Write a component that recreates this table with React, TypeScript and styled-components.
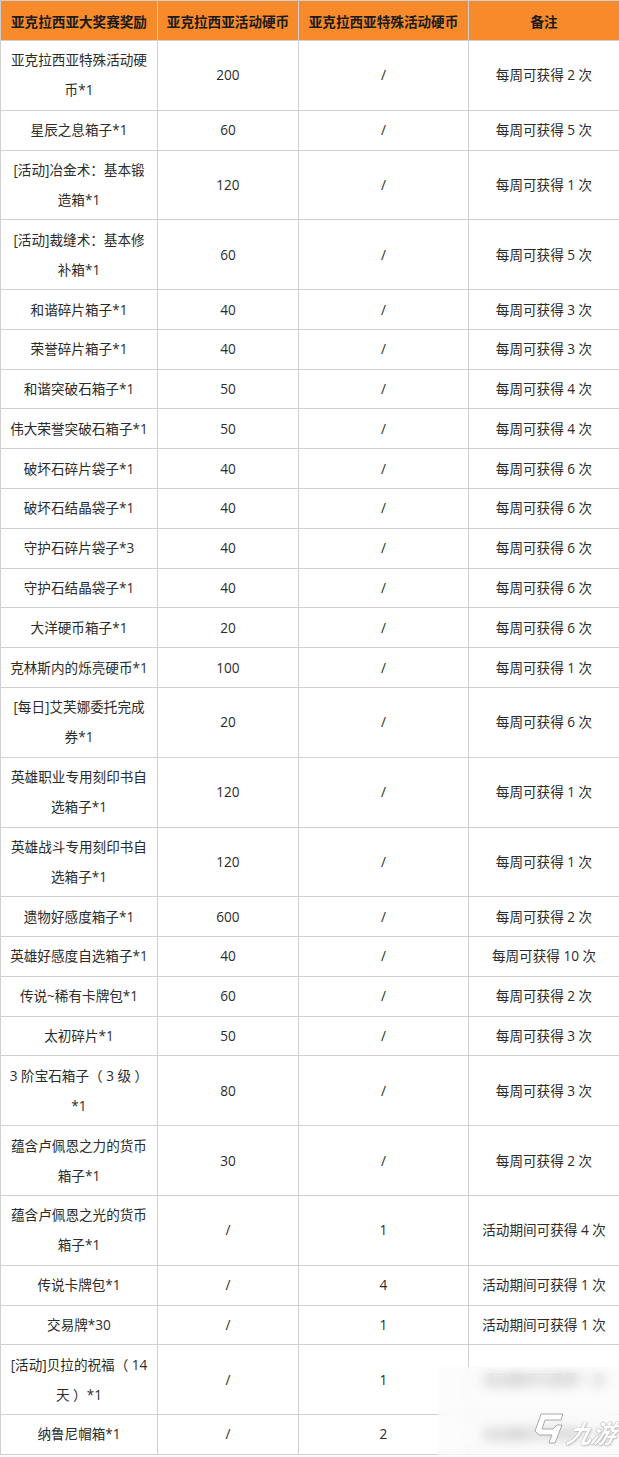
import React from "react";
import styled, { createGlobalStyle } from "styled-components";

const GlobalStyle = createGlobalStyle`
  html, body {
    margin: 0;
    padding: 0;
    background: #fff;
  }
  body {
    font-family: "Open Sans", "Noto Sans CJK SC", sans-serif;
  }
`;

const Page = styled.div`
  position: relative;
  width: 619px;
`;

const Table = styled.table`
  width: 619px;
  border-collapse: collapse;
  table-layout: fixed;
  font-size: 13.6px;
  color: #2b2b2b;
`;

const HeadCell = styled.th`
  background: #f78a2a;
  color: #1b1b1b;
  font-weight: bold;
  border: 1px solid #cfcfcf;
  height: 39px;
  padding: 0 4px;
  line-height: 30px;
  text-align: center;
  white-space: nowrap;
  font-family: "Noto Sans CJK SC", sans-serif;
`;

const Cell = styled.td`
  border: 1px solid #cfcfcf;
  padding: 4.4px 5px;
  line-height: 30px;
  text-align: center;
  vertical-align: middle;
  white-space: pre-line;
`;

const Watermark = styled.div`
  position: absolute;
  left: 438px;
  top: 1367px;
  width: 181px;
  height: 90px;
  background: rgba(250, 250, 250, 0.55);
  backdrop-filter: blur(6px);
  -webkit-backdrop-filter: blur(6px);
  display: flex;
  align-items: flex-end;
  justify-content: flex-end;
  gap: 3px;
  padding: 0 3px 13px 0;
  box-sizing: border-box;
`;

const LogoText = styled.span`
  font-family: "Noto Sans CJK SC", sans-serif;
  font-size: 25px;
  font-style: italic;
  font-weight: bold;
  line-height: 24px;
  color: #fff;
  transform: skewX(-14deg);
  letter-spacing: -1px;
  text-shadow: 0 0 1px #9a9a9a, 0 0 1px #9a9a9a, 1px 1px 2px #c8c8c8;
`;

type Row = [string, string, string, string];

const rows: Row[] = [
  ["亚克拉西亚特殊活动硬\n币*1", "200", "/", "每周可获得 2 次"],
  ["星辰之息箱子*1", "60", "/", "每周可获得 5 次"],
  ["[活动]冶金术：基本锻\n造箱*1", "120", "/", "每周可获得 1 次"],
  ["[活动]裁缝术：基本修\n补箱*1", "60", "/", "每周可获得 5 次"],
  ["和谐碎片箱子*1", "40", "/", "每周可获得 3 次"],
  ["荣誉碎片箱子*1", "40", "/", "每周可获得 3 次"],
  ["和谐突破石箱子*1", "50", "/", "每周可获得 4 次"],
  ["伟大荣誉突破石箱子*1", "50", "/", "每周可获得 4 次"],
  ["破坏石碎片袋子*1", "40", "/", "每周可获得 6 次"],
  ["破坏石结晶袋子*1", "40", "/", "每周可获得 6 次"],
  ["守护石碎片袋子*3", "40", "/", "每周可获得 6 次"],
  ["守护石结晶袋子*1", "40", "/", "每周可获得 6 次"],
  ["大洋硬币箱子*1", "20", "/", "每周可获得 6 次"],
  ["克林斯内的烁亮硬币*1", "100", "/", "每周可获得 1 次"],
  ["[每日]艾芙娜委托完成\n券*1", "20", "/", "每周可获得 6 次"],
  ["英雄职业专用刻印书自\n选箱子*1", "120", "/", "每周可获得 1 次"],
  ["英雄战斗专用刻印书自\n选箱子*1", "120", "/", "每周可获得 1 次"],
  ["遗物好感度箱子*1", "600", "/", "每周可获得 2 次"],
  ["英雄好感度自选箱子*1", "40", "/", "每周可获得 10 次"],
  ["传说~稀有卡牌包*1", "60", "/", "每周可获得 2 次"],
  ["太初碎片*1", "50", "/", "每周可获得 3 次"],
  ["3 阶宝石箱子（ 3 级 ）\n*1", "80", "/", "每周可获得 3 次"],
  ["蕴含卢佩恩之力的货币\n箱子*1", "30", "/", "每周可获得 2 次"],
  ["蕴含卢佩恩之光的货币\n箱子*1", "/", "1", "活动期间可获得 4 次"],
  ["传说卡牌包*1", "/", "4", "活动期间可获得 1 次"],
  ["交易牌*30", "/", "1", "活动期间可获得 1 次"],
  ["[活动]贝拉的祝福（ 14\n天 ）*1", "/", "1", "活动期间可获得 1 次"],
  ["纳鲁尼帽箱*1", "/", "2", "活动期间可获得 1 次"],
];

const LogoMark = () => (
  <svg width="34" height="32" viewBox="0 0 34 32">
    <path
      d="M10 2 L32 2 L30 8 L14 8 L11 17 L22 17 L26 13 L31 13 L24 31 L18 31 L21 23 L8 23 L4 19 Z"
      fill="#fff"
      stroke="#a8a8a8"
      strokeWidth="1"
      strokeLinejoin="round"
    />
  </svg>
);

const App = () => {
  return (
    <React.Fragment>
      <GlobalStyle />
      <Page>
        <Table>
          <colgroup>
            <col style={{ width: 157 }} />
            <col style={{ width: 141 }} />
            <col style={{ width: 170 }} />
            <col style={{ width: 151 }} />
          </colgroup>
          <thead>
            <tr>
              <HeadCell>亚克拉西亚大奖赛奖励</HeadCell>
              <HeadCell>亚克拉西亚活动硬币</HeadCell>
              <HeadCell>亚克拉西亚特殊活动硬币</HeadCell>
              <HeadCell>备注</HeadCell>
            </tr>
          </thead>
          <tbody>
            {rows.map((r, i) => (
              <tr key={i}>
                {r.map((c, j) => (
                  <Cell key={j}>{c}</Cell>
                ))}
              </tr>
            ))}
          </tbody>
        </Table>
        <Watermark>
          <LogoMark />
          <LogoText>九游</LogoText>
        </Watermark>
      </Page>
    </React.Fragment>
  );
};

export default App;
